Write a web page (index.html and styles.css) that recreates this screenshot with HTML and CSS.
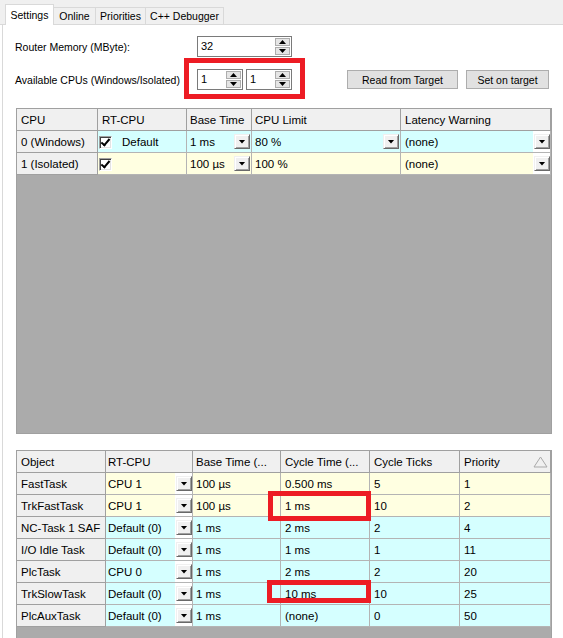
FILE: index.html
```html
<!DOCTYPE html>
<html lang="en">

<head>
    <meta charset="UTF-8">
    <title>Real-Time Settings</title>
    <link rel="stylesheet" href="styles.css">
</head>

<body>
    <div class="tabstrip">
        <div class="tab active" style="width: 49px">Settings</div>
        <div class="tab" style="width: 43px">Online</div>
        <div class="tab" style="width: 51px">Priorities</div>
        <div class="tab" style="width: 79px">C++ Debugger</div>
    </div>

    <div class="panel">
        <div class="form-row">
            <span class="label">Router Memory (MByte):</span>
            <div class="spin spin-wide">
                <span class="spin-value">32</span>
                <span class="spin-btns"><span class="spin-up"></span><span class="spin-down"></span></span>
            </div>
        </div>
        <div class="form-row second">
            <span class="label">Available CPUs (Windows/Isolated)</span>
            <div class="spin">
                <span class="spin-value">1</span>
                <span class="spin-btns"><span class="spin-up"></span><span class="spin-down"></span></span>
            </div>
            <div class="spin spin-next">
                <span class="spin-value">1</span>
                <span class="spin-btns"><span class="spin-up"></span><span class="spin-down"></span></span>
            </div>
            <button type="button" class="btn btn-read">Read from Target</button>
            <button type="button" class="btn btn-set">Set on target</button>
        </div>

        <div class="grid cpu-grid">
            <div class="row head">
                <div class="cell c-cpu">CPU</div>
                <div class="cell c-rt">RT-CPU</div>
                <div class="cell c-base">Base Time</div>
                <div class="cell c-limit">CPU Limit</div>
                <div class="cell c-lat">Latency Warning</div>
            </div>
            <div class="row cyan">
                <div class="cell c-cpu key">0 (Windows)</div>
                <div class="cell c-rt"><span class="check"></span><span class="txt">Default</span></div>
                <div class="cell c-base"><span class="txt">1 ms</span><span class="dd"></span></div>
                <div class="cell c-limit"><span class="txt">80 %</span><span class="dd"></span></div>
                <div class="cell c-lat"><span class="txt">(none)</span><span class="dd-box"><span class="dd"></span></span></div>
            </div>
            <div class="row yellow">
                <div class="cell c-cpu key">1 (Isolated)</div>
                <div class="cell c-rt"><span class="check"></span></div>
                <div class="cell c-base"><span class="txt">100 µs</span><span class="dd"></span></div>
                <div class="cell c-limit"><span class="txt">100 %</span></div>
                <div class="cell c-lat"><span class="txt">(none)</span><span class="dd-box"><span class="dd"></span></span></div>
            </div>
        </div>

        <div class="grid task-grid">
            <div class="row head">
                <div class="cell t-obj">Object</div>
                <div class="cell t-rt">RT-CPU</div>
                <div class="cell t-base">Base Time (...</div>
                <div class="cell t-cycle">Cycle Time (...</div>
                <div class="cell t-ticks">Cycle Ticks</div>
                <div class="cell t-prio"><span class="txt">Priority</span>
                    <svg class="sort" width="15" height="12" viewBox="0 0 15 12">
                        <polygon points="1,11 7.5,1 14,11" fill="none" stroke="#a9a9a9" stroke-width="1" />
                    </svg>
                </div>
            </div>
        </div>
    </div>

    <div class="mark mark-cpus"></div>
    <div class="mark mark-fast"></div>
    <div class="mark mark-slow"></div>

    <script>
        // task rows: name, rt-cpu, base time, cycle time, ticks, priority, colour
        const tasks = [
            ['FastTask', 'CPU 1', '100 µs', '0.500 ms', '5', '1', 'yellow'],
            ['TrkFastTask', 'CPU 1', '100 µs', '1 ms', '10', '2', 'yellow'],
            ['NC-Task 1 SAF', 'Default (0)', '1 ms', '2 ms', '2', '4', 'cyan'],
            ['I/O Idle Task', 'Default (0)', '1 ms', '1 ms', '1', '11', 'cyan'],
            ['PlcTask', 'CPU 0', '1 ms', '2 ms', '2', '20', 'cyan'],
            ['TrkSlowTask', 'Default (0)', '1 ms', '10 ms', '10', '25', 'cyan'],
            ['PlcAuxTask', 'Default (0)', '1 ms', '(none)', '0', '50', 'cyan']
        ];
        const taskGrid = document.querySelector('.task-grid');
        tasks.forEach((t) => {
            const row = document.createElement('div');
            row.className = 'row ' + t[6];
            row.innerHTML =
                '<div class="cell t-obj key">' + t[0] + '</div>' +
                '<div class="cell t-rt"><span class="txt">' + t[1] + '</span><span class="dd-box"><span class="dd"></span></span></div>' +
                '<div class="cell t-base">' + t[2] + '</div>' +
                '<div class="cell t-cycle">' + t[3] + '</div>' +
                '<div class="cell t-ticks">' + t[4] + '</div>' +
                '<div class="cell t-prio">' + t[5] + '</div>';
            taskGrid.appendChild(row);
        });
    </script>
</body>

</html>
```

FILE: styles.css
```css
* {
    box-sizing: border-box;
}

html,
body {
    margin: 0;
}

body {
    position: relative;
    width: 563px;
    height: 638px;
    overflow: hidden;
    background-color: #fff;
    color: #000;
    font-family: "Liberation Sans", Arial, sans-serif;
    font-size: 10.5px;
}

/* tabs */
.tabstrip {
    height: 25px;
    display: flex;
    align-items: flex-end;
    padding-left: 5px;
    background-color: #f0f0f0;
    border-bottom: 1px solid #d9d9d9;
}

.tab {
    height: 17px;
    line-height: 16px;
    text-align: center;
    border: 1px solid #d9d9d9;
    border-bottom: none;
    margin-left: -1px;
    background-color: #f0f0f0;
}

.tab.active {
    height: 21px;
    line-height: 20px;
    margin-left: 0;
    margin-bottom: -1px;
    background-color: #fff;
    position: relative;
    z-index: 1;
}

.panel {
    margin-left: 2px;
    border-left: 1px solid #d9d9d9;
    height: 613px;
    padding: 11px 0 0 12px;
}

/* settings form */
.form-row {
    display: flex;
    align-items: center;
    height: 21px;
}

.form-row.second {
    margin-top: 12px;
}

.label {
    width: 182px;
}

.spin {
    width: 46px;
    height: 21px;
    display: flex;
    border: 1px solid #7a7a7a;
    background-color: #fff;
}

.spin-wide {
    width: 95px;
}

.spin-next {
    margin-left: 3px;
}

.spin-value {
    flex: 1;
    padding-left: 3px;
    line-height: 19px;
    font-size: 11px;
}

.spin-btns {
    width: 16px;
    display: flex;
    flex-direction: column;
    gap: 1px;
    padding: 1px 1px 1px 0;
}

.spin-up,
.spin-down {
    flex: 1;
    display: flex;
    align-items: center;
    justify-content: center;
    background-color: #e5e5e5;
    border: 1px solid #adadad;
}

.spin-up::after,
.spin-down::after {
    content: "";
    width: 7px;
    height: 4px;
    background-color: #000;
}

.spin-up::after {
    clip-path: polygon(50% 0, 100% 100%, 0 100%);
}

.spin-down::after {
    clip-path: polygon(0 0, 100% 0, 50% 100%);
}

.btn {
    height: 19px;
    padding: 0;
    border: 1px solid #adadad;
    background-color: #e1e1e1;
    font-family: inherit;
    font-size: 10.5px;
    color: #000;
}

.btn-read {
    width: 111px;
    margin-left: 55px;
}

.btn-set {
    width: 83px;
    margin-left: 8px;
}

/* grids */
.grid {
    width: 536px;
    margin-left: 1px;
    border: 1px solid #a0a0a0;
    background-color: #ababab;
    font-size: 11.5px;
}

.cpu-grid {
    margin-top: 18px;
    height: 326px;
}

.task-grid {
    margin-top: 16px;
    height: 200px;
}

.row {
    display: flex;
    height: 22px;
}

.cell {
    height: 22px;
    display: flex;
    align-items: center;
    padding-left: 4px;
    white-space: nowrap;
    overflow: hidden;
    border-right: 1px solid #b4b4b4;
    border-bottom: 1px solid #b4b4b4;
}

.cell .txt {
    flex: 1;
}

.head .cell,
.cell.key {
    background-color: #f0f0f0;
    border-color: #a0a0a0;
}

.cyan .cell {
    background-color: #d5ffff;
}

.yellow .cell {
    background-color: #ffffe1;
}

.cyan .cell.key,
.yellow .cell.key {
    background-color: #f0f0f0;
}

.c-cpu { width: 81px; }
.c-rt { width: 89px; padding-left: 1px; }
.c-base { width: 65px; padding-left: 3px; }
.c-limit { width: 149px; padding-left: 3px; }
.c-lat { width: 150px; }

.head .c-rt {
    padding-left: 4px;
}

.t-obj { width: 89px; }
.t-rt { width: 87px; padding-left: 2px; }
.t-base { width: 88px; padding-left: 3px; }
.t-cycle { width: 89px; }
.t-ticks { width: 90px; }
.t-prio { width: 91px; }

.sort {
    margin-right: 2px;
}

/* checkbox */
.check {
    position: relative;
    width: 13px;
    height: 13px;
    margin-top: 2px;
    margin-right: 10px;
    background-color: #fff;
    border: 1px solid;
    border-color: #a0a0a0 #fff #fff #a0a0a0;
    box-shadow: inset 1px 1px 0 #404040, inset -1px -1px 0 #e3e3e3;
}

.check::after {
    content: "";
    position: absolute;
    left: 3px;
    top: 0px;
    width: 3px;
    height: 7px;
    border-right: 2px solid #000;
    border-bottom: 2px solid #000;
    transform: rotate(40deg);
}

/* dropdown button */
.dd {
    width: 16px;
    height: 15px;
    margin-right: 1px;
    display: flex;
    align-items: center;
    justify-content: center;
    background-color: #f0f0f0;
    border: 1px solid;
    border-color: #f0f0f0 #696969 #696969 #f0f0f0;
    box-shadow: inset 1px 1px 0 #fff, inset -1px -1px 0 #a0a0a0;
}

.dd::after {
    content: "";
    width: 7px;
    height: 4px;
    background-color: #000;
    clip-path: polygon(0 0, 100% 0, 50% 100%);
}

.dd-box {
    align-self: stretch;
    display: flex;
    align-items: center;
    padding-left: 1px;
    background-color: #fff;
}

.dd-box .dd {
    margin-right: 0;
}

/* red highlight frames */
.mark {
    position: absolute;
    border: 5px solid #ed1c24;
}

.mark-cpus {
    left: 184px;
    top: 58px;
    width: 121px;
    height: 41px;
}

.mark-fast {
    left: 268px;
    top: 491px;
    width: 103px;
    height: 30px;
}

.mark-slow {
    left: 267px;
    top: 580px;
    width: 104px;
    height: 23px;
}
```
